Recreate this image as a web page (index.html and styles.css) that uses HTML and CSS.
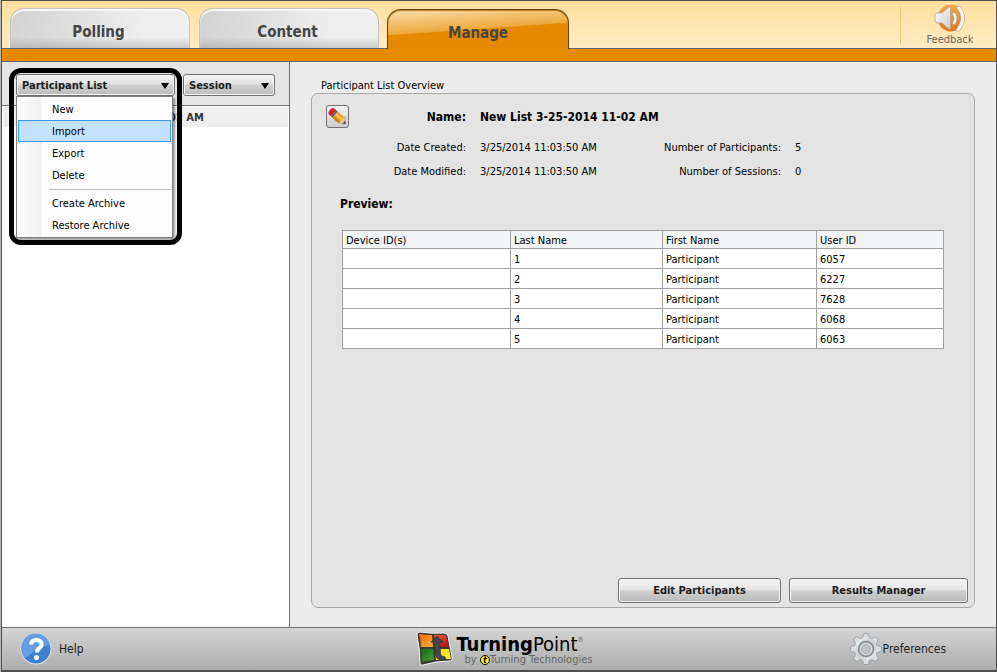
FILE: index.html
```html
<!DOCTYPE html>
<html lang="en">
<head>
<meta charset="utf-8">
<title>TurningPoint</title>
<link rel="stylesheet" href="styles.css">
</head>
<body>
<div class="window">
  <header class="header">
    <nav class="tabs">
      <button class="tab" type="button">Polling</button>
      <button class="tab" type="button">Content</button>
      <button class="tab tab-active" type="button" aria-current="page">Manage</button>
    </nav>
    <button class="feedback" type="button">
      <svg width="32" height="29" viewBox="0 0 32 29" aria-hidden="true">
        <defs>
          <linearGradient id="orb" x1="0" y1="0" x2="0" y2="1"><stop offset="0" stop-color="#f4a94e"/><stop offset="1" stop-color="#e07c10"/></linearGradient>
          <linearGradient id="horn" x1="0" y1="0" x2="1" y2="1"><stop offset="0" stop-color="#ffffff"/><stop offset="1" stop-color="#c9ccd0"/></linearGradient>
        </defs>
        <circle cx="17" cy="14" r="13.5" fill="url(#orb)"/>
        <path d="M1 11q0-2 2-2h5l7-6q1.500-1 1.500 1v20q0 2-1.500 1l-7-6H3q-2 0-2-2z" fill="url(#horn)" stroke="#b5a48c" stroke-width=".8"/>
        <path d="M20 10q3 4.500 0 9" fill="none" stroke="#b9aa98" stroke-width="3.600" stroke-linecap="round"/>
        <path d="M20 10q3 4.500 0 9" fill="none" stroke="#f4f4f4" stroke-width="2.400" stroke-linecap="round"/>
        <path d="M25 4q8 10-1 22" fill="none" stroke="#b9aa98" stroke-width="4.200" stroke-linecap="round"/>
        <path d="M25 4q8 10-1 22" fill="none" stroke="#f4f4f4" stroke-width="3" stroke-linecap="round"/>
      </svg>
      <span>Feedback</span>
    </button>
  </header>
  <div class="band"></div>

  <div class="content">
    <aside class="sidebar">
      <div class="toolbar">
        <div class="menu-anchor">
          <button class="drop drop-list" type="button" aria-haspopup="menu" aria-expanded="true">Participant List<span class="arrow"></span></button>
          <div class="callout"></div>
          <div class="menu" role="menu">
            <button class="item" type="button" role="menuitem">New</button>
            <button class="item item-hover" type="button" role="menuitem">Import</button>
            <button class="item" type="button" role="menuitem">Export</button>
            <button class="item" type="button" role="menuitem">Delete</button>
            <hr class="separator">
            <button class="item" type="button" role="menuitem">Create Archive</button>
            <button class="item" type="button" role="menuitem">Restore Archive</button>
          </div>
        </div>
        <button class="drop drop-session" type="button" aria-haspopup="menu">Session<span class="arrow"></span></button>
      </div>
      <ul class="lists">
        <li class="list-row">New List 3-25-2014 11-02 AM</li>
      </ul>
    </aside>

    <main class="main">
      <h1 class="title">Participant List Overview</h1>
      <section class="panel">
        <div class="summary">
          <button class="edit" type="button" aria-label="Edit name">
            <svg width="19" height="19" viewBox="0 0 19 19" aria-hidden="true">
              <path d="M5 14l10 4 3-1V9z" fill="#777" opacity=".35"/>
              <g transform="translate(3 4) rotate(41)">
                <path d="M3.500-4H1Q-1.500-4-1.500 0T1 4h2.500z" fill="#dd1c24"/>
                <path d="M3.500-4h2v8h-2z" fill="#4d5a86"/>
                <path d="M5.500-4H14v8H5.500z" fill="#f39a17"/>
                <path d="M5.500-2H14v2.500H5.500z" fill="#ffc550"/>
                <path d="M5.500 2.500H14V4H5.500z" fill="#cc7410"/>
                <path d="M14-4l5 3.500v1L14 4z" fill="#e9c79c"/>
                <path d="M17-2l2.500 2L17 2z" fill="#3a3128"/>
              </g>
            </svg>
          </button>
          <dl class="facts">
            <dt class="name">Name:</dt><dd class="name wide">New List 3-25-2014 11-02 AM</dd>
            <dt>Date Created:</dt><dd>3/25/2014 11:03:50 AM</dd>
            <dt>Number of Participants:</dt><dd>5</dd>
            <dt>Date Modified:</dt><dd>3/25/2014 11:03:50 AM</dd>
            <dt>Number of Sessions:</dt><dd>0</dd>
          </dl>
        </div>
        <h2 class="preview">Preview:</h2>
        <table class="grid">
          <colgroup><col class="col-device"><col class="col-last"><col class="col-first"><col></colgroup>
          <thead><tr><th>Device ID(s)</th><th>Last Name</th><th>First Name</th><th>User ID</th></tr></thead>
          <tbody>
            <tr><td></td><td>1</td><td>Participant</td><td>6057</td></tr>
            <tr><td></td><td>2</td><td>Participant</td><td>6227</td></tr>
            <tr><td></td><td>3</td><td>Participant</td><td>7628</td></tr>
            <tr><td></td><td>4</td><td>Participant</td><td>6068</td></tr>
            <tr><td></td><td>5</td><td>Participant</td><td>6063</td></tr>
          </tbody>
        </table>
        <div class="actions">
          <button class="action action-edit" type="button">Edit Participants</button>
          <button class="action action-results" type="button">Results Manager</button>
        </div>
      </section>
    </main>
  </div>

  <footer class="footer">
    <button class="foot-button help" type="button">
      <svg width="32" height="32" viewBox="0 0 32 32" aria-hidden="true">
        <circle cx="16" cy="16" r="15.500" fill="#dfe7f0"/>
        <circle cx="16" cy="16" r="14.500" fill="#3f80cd"/>
        <path d="M1.500 18A14.500 14.500 0 0 1 30 12Q20 13 12 20T4 24.500Q2 21 1.500 18z" fill="#659fe0"/>
        <path d="M11 11.500q.5-4.500 5.500-4.500 5 0 5 4.500 0 2.500-2.500 4-2 1.200-2 4" fill="none" stroke="#fff" stroke-width="4"/>
        <circle cx="16.500" cy="24.500" r="2.600" fill="#fff"/>
      </svg>
      <span>Help</span>
    </button>
    <div class="brand">
      <svg width="37" height="35" viewBox="0 0 37 35" aria-hidden="true">
        <defs>
          <linearGradient id="q1" x1="0" y1="0" x2="1" y2="1"><stop offset="0" stop-color="#ff6a00"/><stop offset="1" stop-color="#ffac3c"/></linearGradient>
          <linearGradient id="q2" x1="0" y1="0" x2="1" y2="1"><stop offset="0" stop-color="#f25a48"/><stop offset="1" stop-color="#a80f10"/></linearGradient>
          <linearGradient id="q3" x1="0" y1="0" x2="1" y2="1"><stop offset="0" stop-color="#15691c"/><stop offset="1" stop-color="#4aa32c"/></linearGradient>
          <linearGradient id="q4" x1="0" y1="0" x2="1" y2="1"><stop offset="0" stop-color="#f4d800"/><stop offset="1" stop-color="#fff34a"/></linearGradient>
        </defs>
        <path d="M1 4q0-3 3-3 12 2 24 1 3 0 4 3l4 21q1 4-3 4-13 0-26 4-3 1-3-2Q4 18 1 4z" fill="#3a3a36" stroke="#f1f1f1"/>
        <path d="M3 3q7 1 13 1l1 12H5Q5 9 3 3z" fill="url(#q1)"/>
        <path d="M18 4h12l3 12H19z" fill="url(#q2)"/>
        <path d="M5 18h12l1 11q-6 0-12 2 0-6-1-13z" fill="url(#q3)"/>
        <path d="M19 18h14l2 10q-7 0-15 1z" fill="url(#q4)"/>
        <path d="M15 11l6-6 6 6-3 .3.500 11.500q.5 3 4.500 3l1 2.500q-9 2-10.500-4L18 11.300z" fill="#43464a" stroke="#26282a" stroke-width=".6"/>
      </svg>
      <div class="wordmark">
        <div class="product"><b>Turning</b>Point<span class="mark">®</span></div>
        <div class="maker">by <span class="coin">t</span>Turning Technologies</div>
      </div>
    </div>
    <button class="foot-button prefs" type="button">
      <svg width="34" height="34" viewBox="-17 -17 34 34" aria-hidden="true">
        <defs><linearGradient id="steel" x1="0" y1="0" x2="1" y2="1"><stop offset="0" stop-color="#f4f6f7"/><stop offset=".5" stop-color="#c9ced1"/><stop offset="1" stop-color="#eef0f1"/></linearGradient></defs>
        <g fill="#d9dddf" stroke="#8b9093" stroke-width=".7">
          <path id="tooth" d="M-4-10l1.500-4.500q.3-1 1.200-1h2.600q.9 0 1.200 1L4-10z"/>
          <use href="#tooth" transform="rotate(45)"/><use href="#tooth" transform="rotate(90)"/><use href="#tooth" transform="rotate(135)"/><use href="#tooth" transform="rotate(180)"/><use href="#tooth" transform="rotate(225)"/><use href="#tooth" transform="rotate(270)"/><use href="#tooth" transform="rotate(315)"/>
        </g>
        <circle r="11.300" fill="url(#steel)"/>
        <circle r="7.500" fill="#c2c7ca" stroke="#868c90" stroke-width="1.600"/>
        <circle r="5.200" fill="#bcbcbc" stroke="#e9ebec" stroke-width="1.200"/>
        <circle r="4.500" fill="#c2c2c2" stroke="#8b9093" stroke-width=".6"/>
      </svg>
      <span>Preferences</span>
    </button>
  </footer>
</div>
</body>
</html>
```
FILE: styles.css
```css
* { box-sizing: border-box; }
body {
  margin: 0;
  background: #b4b8ba;
  color: #000;
  font-family: "DejaVu Sans Condensed", "DejaVu Sans", sans-serif;
  font-size: 11px;
  line-height: 16px;
}
button { font: inherit; color: inherit; margin: 0; padding: 0; border: 0; background: none; }

.window {
  display: flex;
  flex-direction: column;
  min-height: 100vh;
  margin-left: 1px;
  border: 1px solid #4f4f4f;
  border-bottom-width: 2px;
}

/* Tabs */
.header {
  display: flex;
  justify-content: space-between;
  height: 48px;
  background: linear-gradient(#ffdf9c, #ffecc4);
  border-bottom: 1px solid #5f6468;
}
.tabs { display: flex; align-items: flex-end; gap: 8px; padding-left: 8px; margin-bottom: -1px; }
.tab {
  width: 180px;
  height: 40px;
  margin-bottom: 1px;
  padding-top: 6px;
  padding-right: 3px;
  border: 1px solid #c6c4bf;
  border-bottom: 0;
  border-radius: 14px 14px 0 0;
  background:
    linear-gradient(transparent 72%, #8f8f8f66),
    linear-gradient(100deg, #d2d2d2, #efefef 75%);
  box-shadow: inset 0 2px 1px #fafafa;
  color: #444;
  font-size: 15px;
  font-weight: bold;
}
.tab + .tab { margin-left: 1px; }
.tab + .tab-active {
  width: 182px;
  margin-left: 0;
  margin-bottom: 0;
  padding-right: 0;
  border-color: #604408;
  background: linear-gradient(176deg, #fae0b0, #eda93c 48%, #e58a00 50%);
  box-shadow: inset 0 1px 1px #b87814;
  color: #4a4540;
}
.feedback {
  display: flex;
  flex-direction: column;
  align-items: center;
  width: 96px;
  height: 47px;
  padding: 3px 0 0 4px;
  color: #666;
  line-height: 14px;
  background: linear-gradient(#edc878, #edc878) 0 6px / 1px 37px no-repeat;
}
.band { height: 13px; background: #e68a00; border-bottom: 1px solid #5f6468; }

/* Sidebar */
.content { display: flex; flex: 1; }
.sidebar { width: 288px; background: #fff; border-right: 1px solid #6f7376; }
.toolbar {
  display: flex;
  gap: 8px;
  height: 44px;
  padding: 12px 14px 0;
  background: #e4e4e4;
  border-bottom: 1px solid #6f7376;
}
.menu-anchor { position: relative; z-index: 1; }
.drop {
  display: flex;
  align-items: center;
  justify-content: space-between;
  height: 22px;
  padding: 2px 5px 0;
  border: 1px solid #707070;
  border-radius: 3px;
  background: linear-gradient(#f4f4f4, #e2e2e2 45%, #cfcfcf 50%, #bdbdbd);
  box-shadow: inset 0 0 0 1px #f6f6f6;
  color: #1d1d1d;
  font-weight: bold;
}
.drop-list { width: 159px; }
.drop-session { width: 93px; }
.arrow { border: 4px solid transparent; border-top: 6px solid #000; border-bottom: 0; }
.callout {
  position: absolute;
  top: -6px;
  left: -7px;
  width: 173px;
  height: 177px;
  border: 5px solid #000;
  border-radius: 12px;
}
.menu {
  position: absolute;
  top: 22px;
  left: 0;
  width: 157px;
  padding: 1px;
  border: 1px solid #808080;
  background: linear-gradient(90deg, #fcfcfc, #f1f1f1 24px, #fdfdfd 25px);
  box-shadow: 2px 2px 2px #00000066;
}
.item {
  display: block;
  width: 100%;
  height: 22px;
  padding: 2px 0 0 33px;
  border: 1px solid transparent;
  text-align: left;
}
.item-hover { background: #c4e1ff; border-color: #3399ff; }
.separator { height: 1px; margin: 3px 0 2px 31px; border: 0; background: #bdbdbd; }
.lists { margin: 0; padding: 1px 1px 0; list-style: none; }
.list-row { height: 20px; padding: 1px 0 0 37px; background: #efefef; color: #333; font-weight: bold; line-height: 20px; }

/* Overview */
.main { display: flex; flex: 1; flex-direction: column; padding: 17px 21px 19px; background: #ececec; }
.title { margin: 0 10px; font-size: 11px; font-weight: normal; line-height: 14px; }
.panel {
  display: flex;
  flex: 1;
  flex-direction: column;
  padding: 11px 6px 4px 14px;
  border: 1px solid #a8a8a8;
  border-radius: 7px;
  background: #e4e4e4;
}
.summary { display: flex; }
.edit {
  display: grid;
  place-items: center;
  width: 23px;
  height: 23px;
  border: 1px solid #707070;
  border-radius: 3px;
  background: linear-gradient(#f3f3f3, #cfcfcf);
}
.facts {
  display: grid;
  grid-template-columns: 117px 160px 127px 1fr;
  grid-template-rows: 24px 31px 24px;
  column-gap: 14px;
  margin: 0;
}
.facts dt { align-self: end; text-align: right; line-height: 24px; }
.facts dd { align-self: end; margin: 0; line-height: 24px; }
.facts .name { font-size: 12px; font-weight: bold; }
.facts .wide { grid-column: span 3; }
.preview { margin: 12px 14px 18px; font-size: 12px; line-height: 16px; }
.grid {
  width: calc(100% - 40px);
  margin-left: 16px;
  table-layout: fixed;
  border-collapse: collapse;
  background: #fff;
}
.grid th, .grid td { height: 20px; padding: 2px 3px 0; border: 1px solid #a0a0a0; text-align: left; font-weight: normal; }
.grid th { height: 18px; background: #f2f4f6; line-height: 14px; }
.col-device { width: 168px; }
.col-last { width: 152px; }
.col-first { width: 154px; }
.actions { display: flex; justify-content: flex-end; gap: 8px; margin-top: auto; }
.action {
  height: 25px;
  padding-top: 1px;
  border: 1px solid #707070;
  border-radius: 3px;
  background: linear-gradient(#f4f4f4, #e6e6e6 45%, #cfcfcf 52%, #b9b9b9);
  box-shadow: inset 0 0 0 1px #f6f6f6;
  color: #1d1d1d;
  font-weight: bold;
}
.action-edit { width: 163px; }
.action-results { width: 179px; }

/* Footer */
.footer {
  display: grid;
  grid-template-columns: 1fr auto 1fr;
  align-items: center;
  height: 43px;
  padding: 0 50px 0 18px;
  border-top: 1px solid #6f7376;
  background: linear-gradient(#d4d4d4, #adadad);
}
.foot-button { display: flex; align-items: center; color: #222; font-size: 12px; }
.help { gap: 7px; justify-self: start; }
.prefs { gap: 0; justify-self: end; }
.brand { display: flex; gap: 4px; padding-left: 42px; }
.product { color: #000; font-size: 20px; line-height: 18px; }
.mark { font-size: 7px; vertical-align: 9px; color: #666; }
.maker { padding-left: 8px; color: #666; font-size: 11px; line-height: 14px; white-space: nowrap; }
.coin {
  display: inline-block;
  width: 10px;
  height: 10px;
  border: 1px solid #000;
  border-radius: 5px;
  background: #fff21a;
  color: #000;
  font-size: 9px;
  font-style: italic;
  font-weight: bold;
  line-height: 8px;
  text-align: center;
}
```
